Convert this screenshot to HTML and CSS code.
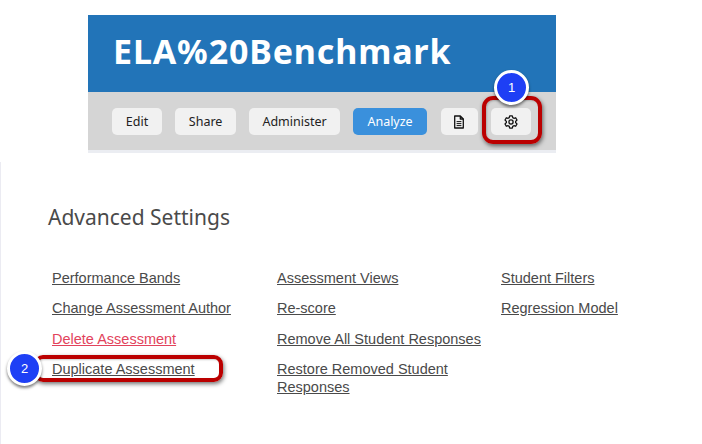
FILE: index.html
```html
<!DOCTYPE html>
<html lang="en">
<head>
<meta charset="UTF-8" />
<meta name="viewport" content="width=device-width, initial-scale=1.0" />
<title>Advanced Settings</title>
<link rel="stylesheet" href="styles.css">
</head>
<body>

<div class="top">
  <h1 class="title">ELA%20Benchmark</h1>
  <div class="toolbar">
    <button class="btn btn-edit">Edit</button>
    <button class="btn btn-share">Share</button>
    <button class="btn btn-admin">Administer</button>
    <button class="btn btn-blue">Analyze</button>
    <button class="btn btn-doc" aria-label="Report">
      <svg width="12" height="14" viewBox="0 0 12 14" fill="none" stroke="#111" stroke-width="1.3" stroke-linejoin="round">
        <path d="M1.7 1h5.6l3 3v9H1.7z"/>
        <path d="M7.3 1v3h3"/>
        <path d="M3.6 6.6h4.8M3.6 8.6h4.8M3.6 10.6h4.8" stroke-width="1"/>
      </svg>
    </button>
    <button class="btn btn-gear" aria-label="Settings">
      <svg width="14" height="14" viewBox="0 0 14 14" fill="none" stroke="#111" stroke-width="1.3" stroke-linejoin="round">
        <path d="M5.24 2.64L5.69 .84H8.31L8.76 2.64L9.89 3.3L11.68 2.78L12.99 5.05L11.65 6.35V7.65L12.99 8.95L11.68 11.22L9.89 10.7L8.76 11.36L8.31 13.16H5.69L5.24 11.36L4.11 10.7L2.32 11.22L1.01 8.95L2.35 7.65V6.35L1.01 5.05L2.32 2.78L4.11 3.3z"/>
        <circle cx="7" cy="7" r="2.1"/>
      </svg>
    </button>
  </div>
  <div class="top-edge"></div>
</div>

<div class="settings">
  <h2 class="settings-title">Advanced Settings</h2>
  <div class="link-grid">
    <ul class="link-col">
      <li><a href="#">Performance Bands</a></li>
      <li><a href="#">Change Assessment Author</a></li>
      <li><a href="#" class="danger">Delete Assessment</a></li>
      <li><a href="#">Duplicate Assessment</a></li>
    </ul>
    <ul class="link-col">
      <li><a href="#">Assessment Views</a></li>
      <li><a href="#">Re-score</a></li>
      <li><a href="#">Remove All Student Responses</a></li>
      <li><a href="#">Restore Removed Student Responses</a></li>
    </ul>
    <ul class="link-col">
      <li><a href="#">Student Filters</a></li>
      <li><a href="#">Regression Model</a></li>
    </ul>
  </div>
</div>

<!-- callouts drawn over the screenshot -->
<div class="ring ring-gear"></div>
<div class="ring ring-dup"></div>
<div class="marker marker-1">1</div>
<div class="marker marker-2">2</div>

</body>
</html>
```

FILE: styles.css
```css
html, body { margin: 0; padding: 0; }
body { position: relative; width: 702px; height: 444px; overflow: hidden; background-color: #fff; font-family: "Liberation Sans", Arial, sans-serif; }

.top { width: 468px; margin: 15px 0 0 88px; }
.title { margin: 0; height: 77px; padding-left: 25px; box-sizing: border-box; background-color: #2274b8; color: #fff; font-family: "Noto Sans", sans-serif; font-size: 34px; font-weight: 700; line-height: 72px; letter-spacing: 0.85px; }
.toolbar { display: flex; align-items: center; height: 58px; padding: 1px 0 0 24px; box-sizing: border-box; background-color: #d5d5d5; }
.top-edge { height: 3px; background-color: #ebedf2; }

.btn { height: 27px; padding: 0; border: none; border-radius: 5px; background-color: #f1f1f1; color: #222; font-family: "Noto Sans", sans-serif; font-size: 12.5px; display: flex; align-items: center; justify-content: center; }
.btn-edit { width: 50px; margin-right: 13.4px; }
.btn-share { width: 60.4px; margin-right: 13.6px; }
.btn-admin { width: 90.4px; margin-right: 13.6px; }
.btn-blue { width: 73.4px; margin-right: 14px; background-color: #3a90dc; color: #fff; }
.btn-doc { width: 37px; margin-right: 13px; }
.btn-gear { width: 40px; }

.settings { margin-top: 9px; height: 282px; padding: 41px 0 0 47px; box-sizing: border-box; border-left: 1px solid #ebebf2; }
.settings-title { margin: 0; font-family: "Noto Sans", sans-serif; font-size: 21px; font-weight: 400; line-height: 28px; color: #4a4a4a; }

.link-grid { display: grid; grid-template-columns: 225px 224px 1fr; margin: 38.5px 0 0 4px; }
.link-col { list-style: none; margin: 0; padding: 0; display: flex; flex-direction: column; gap: 13px; }
.link-col li { line-height: 17.5px; font-size: 14.5px; max-width: 215px; }
.link-col li a { color: #4a4a4a; }
.link-col a.danger { color: #e2435c; }

.ring { position: absolute; box-sizing: border-box; border: 4px solid #bb0000; border-radius: 11px; box-shadow: 1px 2px 4px rgba(0,0,0,0.55), inset 1px 1px 2px rgba(0,0,0,0.2); }
.ring-gear { left: 482px; top: 96px; width: 60px; height: 48px; }
.ring-dup { left: 34px; top: 355px; width: 189px; height: 27px; border-radius: 9px; }

.marker { position: absolute; width: 29px; height: 29px; border: 3px solid #fff; border-radius: 50%; background-color: #1e3ff5; color: #fff; font-size: 13px; line-height: 29px; text-align: center; box-shadow: 0 2px 3px rgba(0,0,0,0.5); }
.marker-1 { left: 494px; top: 70px; }
.marker-2 { left: 7px; top: 351px; }
```
